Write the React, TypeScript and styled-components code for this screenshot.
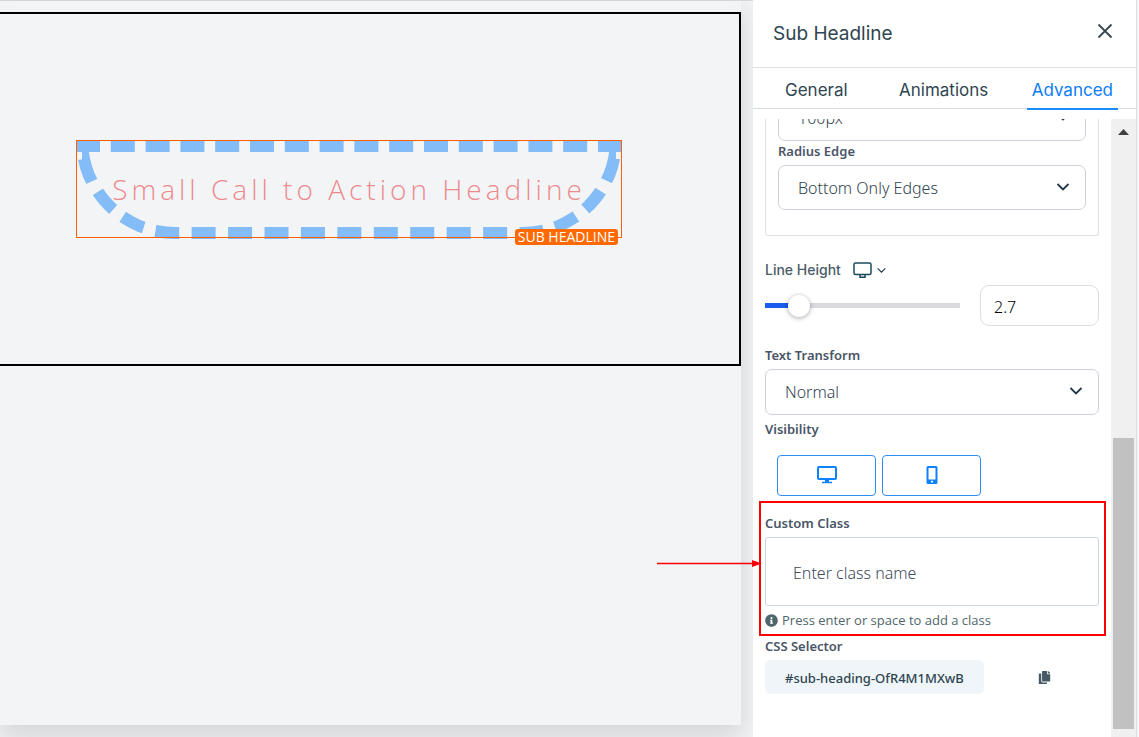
import React from "react";
import styled, { createGlobalStyle } from "styled-components";
import { FaCopy, FaInfoCircle } from "react-icons/fa";

const sans = `"Open Sans", "Noto Sans", sans-serif`;
const noto = `"Noto Sans", "Open Sans", sans-serif`;
const inter = `Inter, "Liberation Sans", sans-serif`;

const Global = createGlobalStyle`
  *, *::before, *::after { box-sizing: border-box; }
  body { margin: 0; background: #f4f5f7; font-family: ${sans}; font-optical-sizing: none; }
  h1, h2 { margin: 0; }
  button, input, select { font: inherit; font-optical-sizing: none; color: inherit; margin: 0; }
`;

const Shell = styled.div`
  display: flex;
  height: 100vh;
  overflow: hidden;
`;

const Stage = styled.main`
  flex: 1;
  min-width: 0;
  display: flex;
  padding: 0 12px 12px 0;
  background: #f1f2f4;
  border-top: 1px solid #d9dadd;
`;

const Page = styled.div`
  flex: 1;
  min-width: 0;
  padding-top: 11px;
  background: #f3f4f6;
  box-shadow: 0 10px 24px rgba(0, 0, 0, 0.13);
`;

const Section = styled.section`
  padding: 126px 117px 126px 76px;
  border: 2px solid #000;
  border-left: 0;
`;

const Selected = styled.div`
  position: relative;
  height: 98px;

  &::after {
    content: "";
    position: absolute;
    inset: 0;
    border: 1px solid #ff5f00;
    pointer-events: none;
  }
`;

const Headline = styled.h2`
  border: 12px dashed #1586f6;
  border-radius: 0 0 100px 100px;
  color: #e9201e;
  opacity: 0.5;
  font-size: 28px;
  font-weight: 300;
  line-height: 75px;
  letter-spacing: 4px;
  text-align: center;
  white-space: nowrap;
`;

const Badge = styled.span`
  position: absolute;
  right: 4px;
  bottom: -7px;
  z-index: 1;
  padding: 0 3px;
  border-radius: 3px;
  background: #ff6a00;
  color: #fff;
  font-size: 14px;
  line-height: 16px;
`;

const Panel = styled.aside`
  width: 384px;
  margin-right: 2px;
  flex: none;
  display: flex;
  flex-direction: column;
  background: #fff;
  border-right: 1px solid #dddfe2;
  color: #2f4550;
`;

const PanelHeader = styled.header`
  display: flex;
  align-items: center;
  justify-content: space-between;
  height: 68px;
  padding: 0 22px 0 20px;
  border-bottom: 1px solid #dee2e6;
  font-family: ${inter};
`;

const Title = styled.h1`
  font-size: 19px;
  line-height: 24px;
  font-weight: 400;
`;

const CloseButton = styled.button`
  display: flex;
  padding: 0 0 6px;
  border: 0;
  background: none;
`;

const Tabs = styled.nav`
  display: flex;
  justify-content: space-between;
  height: 41px;
  padding: 0 18px 0 27px;
  border-bottom: 1px solid #d5dde0;
  font-family: ${inter};
`;

const Tab = styled.button<{ $active?: boolean }>`
  height: 42px;
  padding: 4px 5px 0;
  border: 0;
  border-bottom: 2px solid ${(p) => (p.$active ? "#1a8cff" : "transparent")};
  background: none;
  color: ${(p) => (p.$active ? "#0d7df5" : "#2f4550")};
  font-size: 17px;
  font-weight: 400;
  line-height: 20px;

  &:nth-child(2) { margin-left: 8px; }
`;

const Body = styled.div`
  flex: 1;
  min-height: 0;
  display: flex;
  margin-top: 10px;
  clip-path: inset(0 0 0 -120px);
`;

const Content = styled.div`
  flex: 1;
  min-width: 0;
  margin-top: -24px;
  padding: 0 12px;
`;

const Card = styled.div`
  margin-bottom: 24px;
  padding: 0 12px 25px;
  border: 1px solid #dfe1e8;
  border-top: 0;
  border-radius: 3px;
`;

const Label = styled.label`
  display: block;
  font-family: ${noto};
  font-size: 13px;
  line-height: 20px;
  font-weight: 600;
  color: #4a5568;
`;

const SelectBox = styled.div<{ $tall?: boolean }>`
  position: relative;
  height: ${(p) => (p.$tall ? 46 : 45)}px;

  svg {
    position: absolute;
    right: 16px;
    top: 50%;
    margin-top: -6px;
    pointer-events: none;
  }
`;

const Select = styled.select`
  appearance: none;
  width: 100%;
  height: 100%;
  padding: 0 40px 0 19px;
  border: 1px solid #cfd1db;
  border-radius: 7px;
  background: #fff;
  font-family: ${noto};
  font-size: 16px;
  font-weight: 300;
`;

const Field = styled.div<{ $gap: number; $before?: number }>`
  position: relative;
  display: flex;
  flex-direction: column;
  gap: ${(p) => p.$gap}px;
  margin-top: ${(p) => p.$before ?? 0}px;
`;

const LabelRow = styled.div`
  display: flex;
  align-items: center;
  gap: 12px;

  label {
    font-family: ${inter};
    font-size: 14px;
    font-weight: 500;
    color: #4a5c66;
  }
`;

const DeviceButton = styled.button`
  display: flex;
  align-items: center;
  gap: 4px;
  padding: 0;
  border: 0;
  background: none;
`;

const SliderRow = styled.div`
  display: flex;
  align-items: center;
  gap: 20px;
`;

const Slider = styled.input`
  appearance: none;
  flex: 1;
  min-width: 0;
  height: 22px;
  border-radius: 8px;
  background: linear-gradient(#1a5cf0, #1a5cf0) 0 50% / 16% 5px no-repeat,
    linear-gradient(#d9d9df, #d9d9df) 0 50% / 100% 5px no-repeat;

  &::-webkit-slider-thumb {
    appearance: none;
    width: 22px;
    height: 22px;
    border-radius: 50%;
    background: #fff;
    box-shadow: 0 1px 5px rgba(0, 0, 0, 0.35);
  }
`;

const NumberInput = styled.input`
  width: 119px;
  height: 41px;
  padding: 2px 13px 0;
  border: 1px solid #dcdee6;
  border-radius: 9px;
  font-family: ${noto};
  font-size: 16px;
  font-weight: 300;
  color: #000;
`;

const Devices = styled.div`
  display: flex;
  gap: 6px;
  padding-left: 12px;
`;

const DeviceToggle = styled.button`
  display: flex;
  align-items: center;
  justify-content: center;
  width: 99px;
  height: 41px;
  padding: 0 0 2px;
  border: 1px solid #2f8df5;
  border-radius: 4px;
  background: #fff;
  color: #0d82fb;
`;

const ClassInput = styled.input`
  width: 100%;
  height: 69px;
  padding: 2px 27px 0;
  border: 1px solid #cbd5e0;
  border-radius: 3px;
  font-family: ${noto};
  font-size: 16px;
  font-weight: 300;

  &::placeholder { color: #3d4a5c; opacity: 1; }
`;

const Hint = styled.p`
  display: flex;
  align-items: center;
  gap: 4px;
  margin: 0;
  font-size: 13px;
  line-height: 20px;
  color: #4f666c;
`;

const Highlight = styled.div`
  position: absolute;
  inset: -12px -7px -6px -6px;
  border: 2px solid #f00;
  pointer-events: none;
`;

const Arrow = styled.svg`
  position: absolute;
  right: calc(100% + 3px);
  top: 46px;
`;

const SelectorRow = styled.div`
  display: flex;
  align-items: center;
  justify-content: space-between;
  padding-right: 48px;
`;

const Pill = styled.output`
  padding: 2px 20px 0;
  border-radius: 6px;
  background: #eff5f9;
  font-family: ${noto};
  font-size: 13px;
  line-height: 32px;
  font-weight: 500;
`;

const CopyButton = styled.button`
  display: flex;
  padding: 0;
  border: 0;
  background: none;
  color: #455a64;
`;

const Scrollbar = styled.div`
  flex: none;
  display: flex;
  flex-direction: column;
  align-items: center;
  width: 25px;
  padding: 10px 0 8px;
  background: #f0f0f0;
`;

const Thumb = styled.div`
  width: 21px;
  height: 291px;
  margin-top: auto;
  background: #c1c1c1;
`;

const Chevron = ({ size = 14, width = 1.8 }: { size?: number; width?: number }) => (
  <svg width={size} height={size - 4} viewBox="0 0 14 10" fill="none" stroke="#22384a" strokeWidth={width} aria-hidden>
    <path d="M1.5 2 7 7.5 12.5 2" />
  </svg>
);

export default function App() {
  return (
    <>
      <Global />
      <Shell>
        <Stage>
          <Page>
            <Section>
              <Selected>
                <Headline>Small Call to Action Headline</Headline>
                <Badge>SUB HEADLINE</Badge>
              </Selected>
            </Section>
          </Page>
        </Stage>
        <Panel>
          <PanelHeader>
            <Title>Sub Headline</Title>
            <CloseButton aria-label="Close">
              <svg width="18" height="18" viewBox="0 0 18 18" fill="none" stroke="#37474f" strokeWidth="1.8">
                <path d="M2.500 2.500l13 13M15.500 2.500l-13 13" />
              </svg>
            </CloseButton>
          </PanelHeader>
          <Tabs>
            <Tab>General</Tab>
            <Tab>Animations</Tab>
            <Tab $active>Advanced</Tab>
          </Tabs>
          <Body>
            <Content>
              <Card>
                <SelectBox $tall>
                  <Select aria-label="Radius"><option>100px</option></Select>
                  <Chevron />
                </SelectBox>
                <Field $gap={4}>
                  <Label htmlFor="edge">Radius Edge</Label>
                  <SelectBox>
                    <Select id="edge"><option>Bottom Only Edges</option></Select>
                    <Chevron />
                  </SelectBox>
                </Field>
              </Card>
              <Field $gap={5}>
                <LabelRow>
                  <Label htmlFor="line-height">Line Height</Label>
                  <DeviceButton aria-label="Choose device">
                    <svg width="19" height="17" viewBox="0 0 19 17" fill="none" stroke="#1b4a5c" strokeWidth="1.5" aria-hidden>
                      <rect x="1" y="1" width="17" height="11.500" rx="1.500" />
                      <path d="M7 12.500v2.700h5v-2.700" />
                    </svg>
                    <Chevron size={11} width={1.6} />
                  </DeviceButton>
                </LabelRow>
                <SliderRow>
                  <Slider type="range" min="0" max="20" step="0.1" defaultValue="2.7" aria-label="Line height slider" />
                  <NumberInput id="line-height" defaultValue="2.7" />
                </SliderRow>
              </Field>
              <Field $gap={4} $before={19}>
                <Label htmlFor="transform">Text Transform</Label>
                <SelectBox $tall>
                  <Select id="transform"><option>Normal</option></Select>
                  <Chevron />
                </SelectBox>
              </Field>
              <Field $gap={16} $before={4}>
                <Label as="div">Visibility</Label>
                <Devices>
                  <DeviceToggle aria-label="Desktop">
                    <svg width="20" height="18" viewBox="0 0 20 18" fill="none" stroke="currentColor" strokeWidth="2" aria-hidden>
                      <rect x="1" y="1" width="18" height="12" rx="1" />
                      <path d="M10 13v3" strokeWidth="4" />
                      <path d="M5 16.500h10" strokeWidth="1.500" />
                    </svg>
                  </DeviceToggle>
                  <DeviceToggle aria-label="Mobile">
                    <svg width="12" height="18" viewBox="0 0 12 18" aria-hidden>
                      <path fill="currentColor" fillRule="evenodd" d="M2 0h8a1.500 1.500 0 0 1 1.500 1.500v15a1.500 1.500 0 0 1-1.500 1.500H2A1.500 1.500 0 0 1 .5 16.500v-15A1.500 1.500 0 0 1 2 0zM2.500 2v11.500h7V2zM5 14.800v1.700h2v-1.700z" />
                    </svg>
                  </DeviceToggle>
                </Devices>
              </Field>
              <Field $gap={4} $before={17}>
                <Label htmlFor="class">Custom Class</Label>
                <ClassInput id="class" placeholder="Enter class name" />
                <Hint><FaInfoCircle size={13} />Press enter or space to add a class</Hint>
                <Highlight />
                <Arrow width="105" height="9" viewBox="0 0 105 9" aria-hidden>
                  <path d="M0 4.500h96" stroke="#f00" strokeWidth="1.500" />
                  <path d="M95 1l10 3.500-10 3.500z" fill="#f00" />
                </Arrow>
              </Field>
              <Field $gap={4} $before={6}>
                <Label as="div">CSS Selector</Label>
                <SelectorRow>
                  <Pill>#sub-heading-OfR4M1MXwB</Pill>
                  <CopyButton aria-label="Copy selector"><FaCopy size={13} /></CopyButton>
                </SelectorRow>
              </Field>
            </Content>
            <Scrollbar>
              <svg width="11" height="6" viewBox="0 0 11 6" aria-hidden><path d="M0 6 5.500 0 11 6z" fill="#404040" /></svg>
              <Thumb />
            </Scrollbar>
          </Body>
        </Panel>
      </Shell>
    </>
  );
}
